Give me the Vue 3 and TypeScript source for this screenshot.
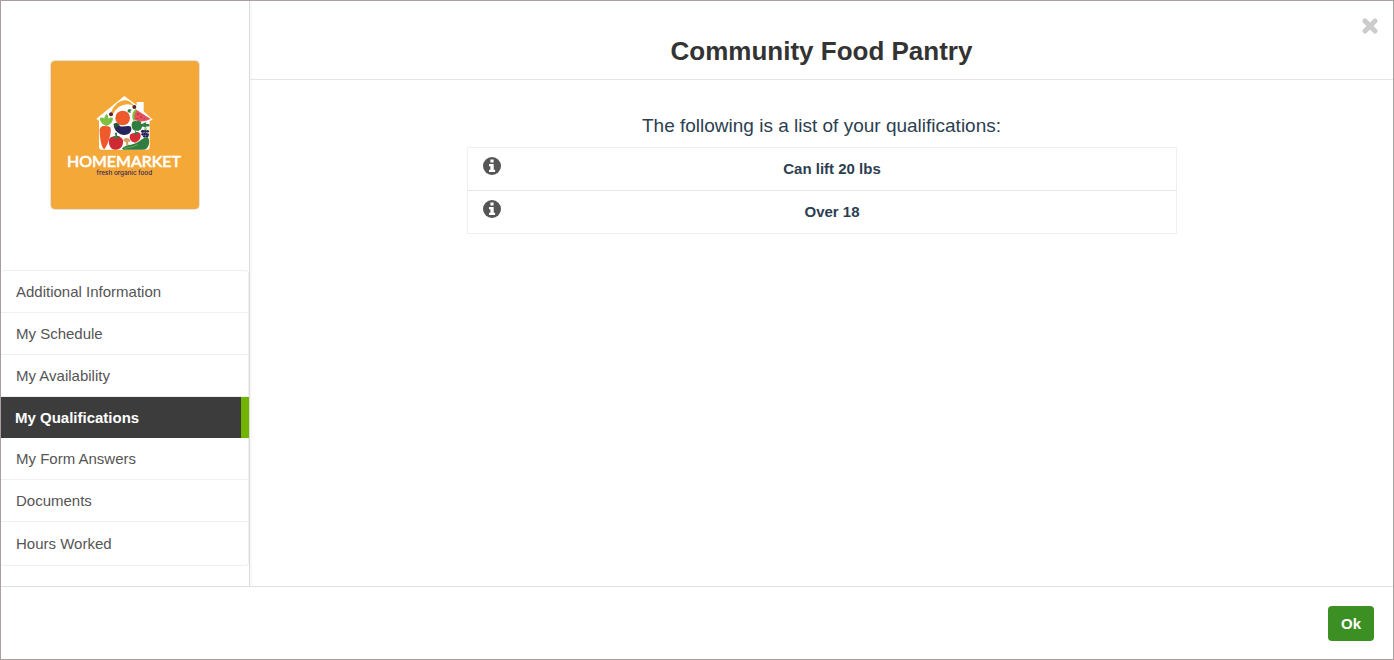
<script setup lang="ts">
import { ref } from 'vue'

const menu: string[] = [
  'Additional Information',
  'My Schedule',
  'My Availability',
  'My Qualifications',
  'My Form Answers',
  'Documents',
  'Hours Worked',
]
const active = ref('My Qualifications')
const qualifications: string[] = ['Can lift 20 lbs', 'Over 18']
</script>

<template>
  <div class="dialog" role="dialog" aria-labelledby="dialog-title">
    <div class="body">
      <aside class="sidebar">
        <svg class="logo" viewBox="33 33 444 444" role="img" aria-label="Homemarket, fresh organic food">
          <rect x="33" y="33" width="444" height="444" fill="#f4a838" />
          <path d="M253 138 L290 166 V156 H311 V184 L338 209 L329 213 V290 Q329 299 320 299 H186 Q177 299 177 290 V212 L169 206 Z" fill="#fff" />
          <path d="M212 190 C222 164 238 152 254 151 C268 151 276 159 283 169 C263 154 230 167 221 190 Z" fill="#f4a838" />
          <circle cx="213" cy="193" r="6" fill="#5d2424" />
          <circle cx="283" cy="171" r="6" fill="#5d2424" />
          <path d="M199 228 C188 224 181 216 179 206 C183 201 190 202 193 206 C193 199 197 194 200 192 C204 196 206 202 205 207 C209 202 215 201 219 205 C218 217 210 225 199 228Z" fill="#7cc142" />
          <path d="M179 244 C178 231 188 226 199 229 C211 226 214 236 212 247 C209 268 202 287 193 298 C184 295 180 266 179 244Z" fill="#ee5a2c" />
          <circle cx="248" cy="204" r="22" fill="#ee5a2c" />
          <path d="M263 187 Q261 179 267 177 L276 179 L271 183 L273 188 Z" fill="#2f7d3f" />
          <path d="M287 178 L332 207 Q309 219 284 211 Q276 196 287 178Z" fill="#e65058" />
          <path d="M287 177 Q271 192 279 211 L285 212 Q279 195 291 181Z" fill="#7cc142" />
          <path d="M294 190v5M303 199v4M292 204v3M313 205v2" stroke="#442235" stroke-width="2" />
          <path d="M221 224 Q225 217 233 224 C244 233 254 228 265 228 C276 228 276 239 271 247 C265 256 249 257 240 252 C228 246 222 236 221 224Z" fill="#26245d" />
          <path d="M220 222 L230 218 L241 226 L233 228 L228 235Z" fill="#26582f" />
          <path d="M275 225 C274 215 282 211 290 214 C297 210 304 214 304 222 L327 222 V229 L306 230 C304 241 295 243 288 242 C279 242 275 235 275 225Z" fill="#2f7d3f" />
          <path d="M304 223 L319 216 L318 222 H328 V229 H317 V235Z" fill="#2f7d3f" />
          <g fill="#26245d">
            <circle cx="308" cy="244" r="5" /><circle cx="316" cy="243" r="4" /><circle cx="323" cy="244" r="4" />
            <circle cx="308" cy="253" r="4" /><circle cx="316" cy="251" r="5" /><circle cx="323" cy="254" r="4" />
            <circle cx="313" cy="259" r="4" /><circle cx="321" cy="259" r="4" />
          </g>
          <path d="M314 241 L311 234 L316 236 L320 232 L320 240Z" fill="#7cc142" />
          <path d="M269 260 C270 250 278 248 285 251 C291 244 301 247 302 255 C303 267 295 275 285 278 C276 275 269 271 269 260Z" fill="#d72b35" />
          <path d="M280 251 L286 247 L284 240 L289 246 L296 247 L289 254Z" fill="#2f7d3f" />
          <path d="M207 275 C206 262 215 258 226 262 C239 257 250 264 249 276 C249 290 240 299 227 299 C214 299 207 289 207 275Z" fill="#cf2935" />
          <path d="M217 259 L226 258 L225 248 L231 248 L231 257 L241 259 L232 263 L229 269 L224 263Z" fill="#2f7d3f" />
          <path d="M249 272 Q251 262 261 264 Q270 265 271 275 L264 276 L266 285 L259 287 L258 277Z" fill="#d5a266" />
          <path d="M246 295 C261 282 275 287 288 279 C302 273 310 262 322 261 Q329 266 327 281 Q324 299 308 299 H249Z" fill="#2f7d3f" />
          <path d="M252 295 Q277 292 294 284" fill="none" stroke="#82bd61" stroke-width="2" />
          <text class="logo-name" x="252" y="350" text-anchor="middle">HOMEMARKET</text>
          <text class="logo-tag" x="253" y="374" text-anchor="middle">fresh organic food</text>
        </svg>
        <nav class="menu" aria-label="Sections">
          <button
            v-for="item in menu"
            :key="item"
            type="button"
            class="menu-item"
            :class="{ active: item === active }"
            :aria-current="item === active ? 'page' : undefined"
            @click="active = item"
          >{{ item }}</button>
        </nav>
      </aside>
      <main class="main">
        <header class="header">
          <h1 id="dialog-title">Community Food Pantry</h1>
          <button type="button" class="close" aria-label="Close">
            <svg viewBox="0 0 16 16" width="16" height="16" aria-hidden="true">
              <path d="M3 3 L13 13 M13 3 L3 13" stroke="currentColor" stroke-width="5" stroke-linecap="round" />
            </svg>
          </button>
        </header>
        <section class="content">
          <p class="intro">The following is a list of your qualifications:</p>
          <ul class="list">
            <li v-for="q in qualifications" :key="q" class="row">
              <button type="button" class="info" :aria-label="'About ' + q">
                <svg viewBox="0 0 18 18" width="18" height="18" aria-hidden="true">
                  <circle cx="9" cy="9" r="9" fill="currentColor" />
                  <path d="M7.4 2.6 H10.6 V5.4 H7.4 Z M6 7 H10.7 V12.7 H12.1 V15 H6 V12.7 H7.4 V9.2 H6 Z" fill="#fff" />
                </svg>
              </button>
              <span class="name">{{ q }}</span>
            </li>
          </ul>
        </section>
      </main>
    </div>
    <footer class="footer">
      <button type="button" class="ok">Ok</button>
    </footer>
  </div>
</template>

<style>
body {
  margin: 0;
  background: #fff;
}
</style>

<style scoped>
.dialog {
  box-sizing: border-box;
  display: flex;
  flex-direction: column;
  min-height: 100vh;
  border: 1px solid #aaa0a2;
  background: #fff;
  color: #2c3e50;
  font-family: "Liberation Sans", Arial, sans-serif;
  font-size: 15px;
  line-height: 21px;
}
button {
  margin: 0;
  border: 0;
  background: none;
  font: inherit;
  cursor: pointer;
}
.body {
  flex: 1;
  display: flex;
}
.sidebar {
  box-sizing: border-box;
  flex: none;
  display: flex;
  flex-direction: column;
  width: 249px;
  padding: 60px 0 20px;
  border-right: 1px solid #dcdcdc;
  box-shadow: 1px 0 3px #0000000d;
}
.logo {
  align-self: center;
  width: 148px;
  height: 148px;
  margin-bottom: 61px;
  border-radius: 4px;
  box-shadow: 0 0 0 1px #e4e4e4;
}
.logo-name {
  fill: #fff;
  stroke: #fff;
  stroke-width: 2px;
  font: 400 48px Lato, sans-serif;
}
.logo-tag {
  fill: #33265a;
  font: 500 19px Inter, sans-serif;
}
.menu {
  display: flex;
  flex-direction: column;
  border: 1px solid #ecf0f1;
  border-left: 0;
  border-radius: 4px;
}
.menu-item {
  padding: 10px 15px;
  border-bottom: 1px solid #ecf0f1;
  color: #555;
  text-align: left;
  line-height: 21px;
}
.menu-item:last-child {
  padding: 11px 15px;
  border-bottom: 0;
}
.menu-item.active {
  margin-right: -1px;
  padding: 10px 14px;
  border-right: 8px solid #72b500;
  border-bottom: 0;
  background: #3c3c3c;
  color: #fff;
  font-weight: 700;
}
.main {
  flex: 1;
  min-width: 0;
}
.header {
  position: relative;
  padding: 32px 48px 10px;
  border-bottom: 1px solid #e5e5e5;
  text-align: center;
}
h1 {
  margin: 0;
  color: #333;
  font-size: 26px;
  line-height: 36px;
}
.close {
  position: absolute;
  top: 17px;
  right: 15px;
  display: flex;
  padding: 0;
  color: #ccc;
}
.content {
  padding: 32px 20px;
}
.intro {
  margin: 0 0 7px;
  font-size: 19px;
  line-height: 28px;
  text-align: center;
}
.list {
  box-sizing: border-box;
  max-width: 710px;
  margin: 0 auto;
  padding: 0;
  list-style: none;
}
.row {
  display: flex;
  align-items: flex-start;
  padding: 9px 15px 11px;
  border: 1px solid #ecf0f1;
}
.row + .row {
  margin-top: -1px;
  border-top-color: #e2e8e9;
}
.info {
  display: flex;
  margin-right: 3px;
  padding: 0;
  color: #555;
}
.name {
  flex: 1;
  padding-top: 1px;
  font-weight: 700;
  line-height: 21px;
  text-align: center;
}
.footer {
  display: flex;
  justify-content: flex-end;
  padding: 19px 19px 18px;
  border-top: 1px solid #e0e0e0;
}
.ok {
  padding: 7px 13px;
  border-radius: 4px;
  background: #3c8f22;
  color: #fff;
  font-weight: 700;
}
</style>
